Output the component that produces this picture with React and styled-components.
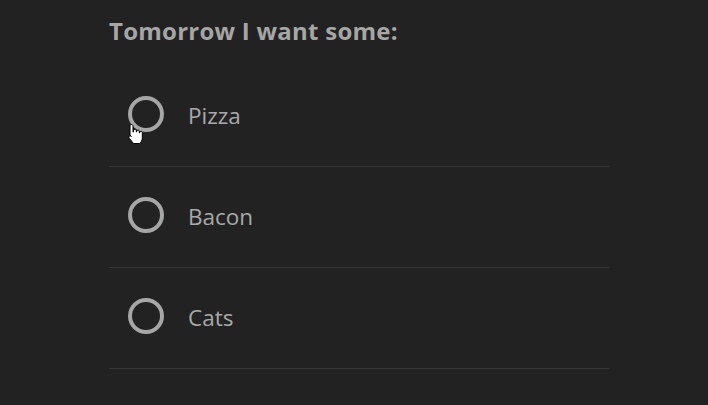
import React from 'react'
import styled, { createGlobalStyle } from 'styled-components'

const GlobalStyle = createGlobalStyle`
  html, body {
    margin: 0;
    padding: 0;
    background: #222222;
  }
  body {
    font-family: "Open Sans", "Noto Sans", sans-serif;
    color: #a9a9a9;
  }
`

const Wrapper = styled.div`
  width: 500px;
  margin: 0 0 0 109px;
  padding-top: 14px;
`

const Title = styled.h2`
  margin: 0;
  font-size: 24px;
  line-height: 34px;
  font-weight: 700;
  letter-spacing: 0.25px;
  color: #a6a6a6;
`

const List = styled.div`
  display: flex;
  flex-direction: column;
  margin-top: 18px;
`

const Row = styled.label`
  position: relative;
  display: flex;
  align-items: center;
  height: 100px;
  border-bottom: 1px solid #363636;
  padding-left: 19px;
  cursor: pointer;
`

const Ring = styled.span`
  box-sizing: border-box;
  width: 36px;
  height: 36px;
  border: 4.5px solid #a6a6a6;
  border-radius: 50%;
  margin-bottom: 4px;
`

const Label = styled.span`
  margin-left: 24px;
  margin-bottom: 2px;
  font-size: 22.5px;
  color: #a9a9a9;
`

const Pointer = styled.svg`
  position: absolute;
  left: 18px;
  top: 57px;
`

const HandCursor = () => (
  <Pointer width="17" height="22" viewBox="0 0 17 22">
    <path
      d="M4.5 1.5c.8 0 1.5.7 1.5 1.5v6h.5V7.5c0-.8.7-1.3 1.4-1.3s1.4.5 1.4 1.3V9h.4V8.3c0-.8.6-1.3 1.3-1.3s1.3.5 1.3 1.3V10h.4v-.6c0-.7.6-1.2 1.3-1.2s1.3.5 1.3 1.2v5.6c0 2.4-1.3 4.5-3 5.5H6.5L2.3 15.3c-.6-.7-.5-1.6.1-2.1s1.5-.4 2 .3L3 12V3c0-.8.7-1.5 1.5-1.5z"
      fill="#fff"
      stroke="#000"
      strokeWidth="1"
    />
  </Pointer>
)

const options = ['Pizza', 'Bacon', 'Cats']

const App = () => (
  <>
    <GlobalStyle />
    <Wrapper>
      <Title>Tomorrow I want some:</Title>
      <List>
        {options.map((o, i) => (
          <Row key={o}>
            <Ring />
            <Label>{o}</Label>
            {i === 0 && <HandCursor />}
          </Row>
        ))}
      </List>
    </Wrapper>
  </>
)

export default App
